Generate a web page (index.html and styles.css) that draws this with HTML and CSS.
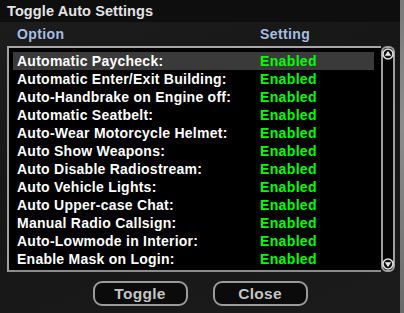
FILE: index.html
```html
<!DOCTYPE html>
<html>
<head>
<meta charset="utf-8">
<link rel="stylesheet" href="styles.css">
</head>
<body>
<div class="screen">
  <div class="dialog">
    <div class="titlebar">Toggle Auto Settings</div>
    <div class="header">
      <span>Option</span>
      <span>Setting</span>
    </div>
    <div class="listwrap">
      <div class="list">
        <div class="row selected"><span>Automatic Paycheck:</span><span class="val">Enabled</span></div>
        <div class="row"><span>Automatic Enter/Exit Building:</span><span class="val">Enabled</span></div>
        <div class="row"><span>Auto-Handbrake on Engine off:</span><span class="val">Enabled</span></div>
        <div class="row"><span>Automatic Seatbelt:</span><span class="val">Enabled</span></div>
        <div class="row"><span>Auto-Wear Motorcycle Helmet:</span><span class="val">Enabled</span></div>
        <div class="row"><span>Auto Show Weapons:</span><span class="val">Enabled</span></div>
        <div class="row"><span>Auto Disable Radiostream:</span><span class="val">Enabled</span></div>
        <div class="row"><span>Auto Vehicle Lights:</span><span class="val">Enabled</span></div>
        <div class="row"><span>Auto Upper-case Chat:</span><span class="val">Enabled</span></div>
        <div class="row"><span>Manual Radio Callsign:</span><span class="val">Enabled</span></div>
        <div class="row"><span>Auto-Lowmode in Interior:</span><span class="val">Enabled</span></div>
        <div class="row"><span>Enable Mask on Login:</span><span class="val">Enabled</span></div>
      </div>
      <div class="scrollbar">
        <svg class="arrow" width="12" height="12" viewBox="0 0 12 12">
          <circle cx="6" cy="6" r="5" fill="#111" stroke="#e0e0e0" stroke-width="1.6"/>
          <polygon points="6,3 9.2,7.8 2.8,7.8" fill="#e8e8e8"/>
        </svg>
        <svg class="arrow" width="12" height="12" viewBox="0 0 12 12">
          <circle cx="6" cy="6" r="5" fill="#111" stroke="#e0e0e0" stroke-width="1.6"/>
          <polygon points="6,9 9.2,4.2 2.8,4.2" fill="#e8e8e8"/>
        </svg>
      </div>
    </div>
    <div class="buttons">
      <div class="btn">Toggle</div>
      <div class="btn">Close</div>
    </div>
  </div>
  <div class="edge"></div>
</div>
</body>
</html>
```
FILE: styles.css
```css
html, body {
  margin: 0;
  padding: 0;
  background: #1a1a1a;
}
.screen {
  display: flex;
  width: 404px;
  height: 313px;
  overflow: hidden;
  font-family: "Liberation Sans", Arial, sans-serif;
  font-weight: bold;
}
.dialog {
  width: 400px;
  height: 313px;
  display: flex;
  flex-direction: column;
  background: linear-gradient(160deg, #1d1d1d 0%, #161616 45%, #1b1b1b 100%);
}
.edge {
  width: 4px;
  height: 313px;
  background: linear-gradient(180deg, #7a7a7a 0%, #8c8c8c 40%, #6a6a6a 100%);
}
.titlebar {
  height: 22px;
  box-sizing: border-box;
  padding: 2px 0 0 7px;
  background: #0e0e0e;
  color: #e4e4e4;
  font-size: 14.5px;
  line-height: 18px;
  letter-spacing: 0.1px;
}
.header {
  height: 24px;
  box-sizing: border-box;
  padding: 4px 0 0 17px;
  display: grid;
  grid-template-columns: 243px 1fr;
  color: #a6bfe2;
  font-size: 14px;
  line-height: 16px;
  letter-spacing: 0.4px;
}
.listwrap {
  display: flex;
  margin-left: 7px;
  height: 226px;
}
.list {
  width: 374px;
  box-sizing: border-box;
  border: 2px solid #8c8c8c;
  border-top-color: #a8a8a8;
  border-left-color: #a0a0a0;
  border-right: none;
  background: #000;
  padding: 4px 0 0 4px;
}
.row {
  display: grid;
  grid-template-columns: 243px 1fr;
  height: 18px;
  width: 361px;
  box-sizing: border-box;
  padding-left: 4px;
  color: #ffffff;
  font-size: 14px;
  line-height: 18px;
  letter-spacing: 0.25px;
  white-space: nowrap;
}
.row.selected {
  background: #3a3a3a;
}
.val {
  color: #00ff00;
  letter-spacing: 0.35px;
}
.scrollbar {
  width: 14px;
  box-sizing: border-box;
  border: 2px solid #a0a0a0;
  border-radius: 6px;
  background: #050505;
  display: flex;
  flex-direction: column;
  justify-content: space-between;
  align-items: center;
}
.arrow {
  display: block;
}
.buttons {
  display: flex;
  justify-content: center;
  gap: 25px;
  padding-top: 9px;
}
.btn {
  width: 95px;
  height: 25px;
  box-sizing: border-box;
  border: 2px solid #9a9a9a;
  border-radius: 9px;
  background: #0b0b0b;
  color: #c4c4c4;
  font-size: 15.5px;
  line-height: 21px;
  text-align: center;
  letter-spacing: 0.3px;
}
```
